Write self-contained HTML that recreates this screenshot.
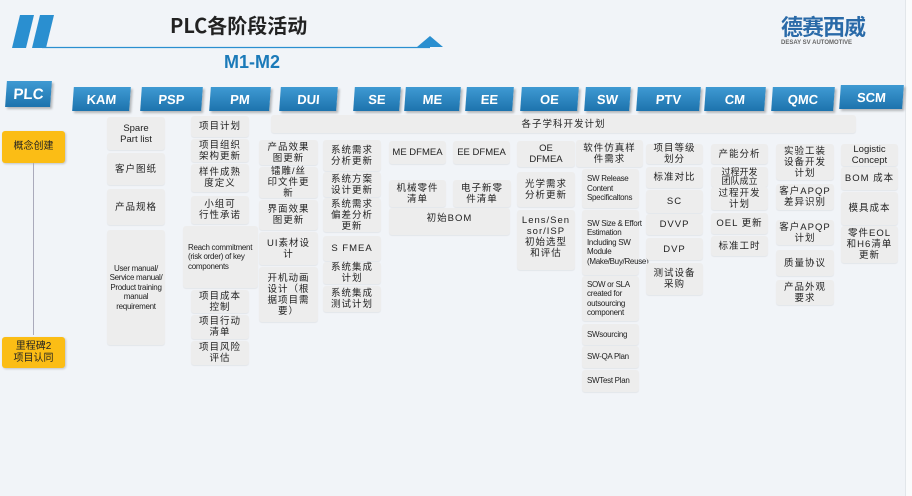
<!DOCTYPE html>
<html><head><meta charset="utf-8">
<style>
*{margin:0;padding:0;box-sizing:border-box}
body{width:912px;height:496px;overflow:hidden;background:#f1f4f8;font-family:"Liberation Sans","Noto Sans CJK SC",sans-serif;position:relative}
.strip{position:absolute;left:905px;top:0;width:7px;height:496px;background:#fafbfc;border-left:1px solid #e2e6ea}
.b{position:absolute;background:#ededed;border-radius:3px;box-shadow:0 1px 1px rgba(0,0,0,.06);display:flex;align-items:center;justify-content:center;text-align:center;font-size:9.5px;line-height:11px;color:#222;letter-spacing:1px;padding:1px}
.s{font-size:8px;line-height:9.5px;letter-spacing:-.3px}
.l{justify-content:flex-start;text-align:left}
.t{position:absolute;height:24px;background:linear-gradient(#3f9ad3,#1d73ad);color:#fff;font-weight:bold;font-size:13px;display:flex;align-items:center;justify-content:center;box-shadow:2px 2px 2px rgba(0,0,0,.25);transform:skewX(-4deg);font-family:"Liberation Sans Narrow","Liberation Sans",sans-serif}
.y{position:absolute;left:2px;width:63px;background:#fbbd15;border-radius:3px;box-shadow:1px 1px 2px rgba(0,0,0,.2);display:flex;align-items:center;justify-content:center;text-align:center;font-size:10px;line-height:12px;color:#222}
</style></head><body>
<div class="strip"></div>
<svg style="position:absolute;left:0;top:0" width="460" height="60">
<polygon points="20,15 34,15 26,48 12,48" fill="#2a8fd0"/>
<polygon points="40,15 54,15 46,48 32,48" fill="#2a8fd0"/>
<line x1="42" y1="47.5" x2="430" y2="47.5" stroke="#2a8fd0" stroke-width="1.2"/>
<polygon points="243,36 256,47 230,47" fill="#2a8fd0" transform="translate(187,0)"/>
</svg>
<div style="position:absolute;left:170px;top:10px;font-size:20px;font-weight:bold;color:#222;font-family:'Liberation Sans Narrow','Noto Sans CJK SC',sans-serif">PLC各阶段活动</div>
<div style="position:absolute;left:224px;top:52px;font-size:18px;font-weight:bold;color:#1b7ab9;font-family:'Liberation Sans Narrow','Liberation Sans',sans-serif">M1-M2</div>
<div style="position:absolute;left:781px;top:14px;font-size:22px;font-weight:bold;color:#2a6aa8;letter-spacing:-1px;font-family:'Noto Sans CJK SC',sans-serif;line-height:24px">德赛西威</div>
<div style="position:absolute;left:781px;top:40px;font-size:6px;font-weight:bold;color:#666">DESAY SV AUTOMOTIVE</div>

<div class="t" style="left:6px;top:81px;width:45px;height:26px;font-size:15px">PLC</div>
<div class="t" style="left:73px;top:87px;width:57px">KAM</div>
<div class="t" style="left:141px;top:87px;width:61px">PSP</div>
<div class="t" style="left:210px;top:87px;width:60px">PM</div>
<div class="t" style="left:280px;top:87px;width:57px">DUI</div>
<div class="t" style="left:354px;top:87px;width:46px">SE</div>
<div class="t" style="left:405px;top:87px;width:55px">ME</div>
<div class="t" style="left:466px;top:87px;width:47px">EE</div>
<div class="t" style="left:521px;top:87px;width:57px">OE</div>
<div class="t" style="left:585px;top:87px;width:45px">SW</div>
<div class="t" style="left:637px;top:87px;width:63px">PTV</div>
<div class="t" style="left:705px;top:87px;width:60px">CM</div>
<div class="t" style="left:772px;top:87px;width:62px">QMC</div>
<div class="t" style="left:840px;top:85px;width:63px">SCM</div>

<div class="y" style="top:131px;height:32px">概念创建</div>
<div style="position:absolute;left:33px;top:163px;width:1px;height:172px;background:#aab"></div>
<div class="y" style="top:337px;height:31px">里程碑2<br>项目认同</div>

<div class="b" style="left:271px;top:115px;width:585px;height:18px">各子学科开发计划</div>

<div class="b" style="left:107px;top:117px;width:58px;height:33px;letter-spacing:0">Spare<br>Part list</div>
<div class="b" style="left:107px;top:153px;width:58px;height:32px">客户图纸</div>
<div class="b" style="left:107px;top:189px;width:58px;height:36px">产品规格</div>
<div class="b s" style="left:107px;top:230px;width:58px;height:115px">User manual/ Service manual/ Product training manual requirement</div>

<div class="b" style="left:191px;top:116px;width:58px;height:21px">项目计划</div>
<div class="b" style="left:191px;top:139px;width:58px;height:23px">项目组织<br>架构更新</div>
<div class="b" style="left:191px;top:164px;width:58px;height:28px">样件成熟<br>度定义</div>
<div class="b" style="left:191px;top:196px;width:58px;height:28px">小组可<br>行性承诺</div>
<div class="b s l" style="left:183px;top:226px;width:75px;height:62px;padding-left:5px">Reach commitment (risk order) of key components</div>
<div class="b" style="left:191px;top:290px;width:58px;height:23px">项目成本<br>控制</div>
<div class="b" style="left:191px;top:315px;width:58px;height:24px">项目行动<br>清单</div>
<div class="b" style="left:191px;top:341px;width:58px;height:24px">项目风险<br>评估</div>

<div class="b" style="left:259px;top:140px;width:59px;height:25px">产品效果<br>图更新</div>
<div class="b" style="left:259px;top:167px;width:59px;height:31px">镭雕/丝<br>印文件更<br>新</div>
<div class="b" style="left:259px;top:200px;width:59px;height:30px">界面效果<br>图更新</div>
<div class="b" style="left:259px;top:232px;width:59px;height:33px">UI素材设<br>计</div>
<div class="b" style="left:259px;top:267px;width:59px;height:55px">开机动画<br>设计（根<br>据项目需<br>要）</div>

<div class="b" style="left:323px;top:140px;width:58px;height:31px">系统需求<br>分析更新</div>
<div class="b" style="left:323px;top:172px;width:58px;height:25px">系统方案<br>设计更新</div>
<div class="b" style="left:323px;top:198px;width:58px;height:34px">系统需求<br>偏差分析<br>更新</div>
<div class="b" style="left:323px;top:236px;width:58px;height:25px">S FMEA</div>
<div class="b" style="left:323px;top:262px;width:58px;height:22px">系统集成<br>计划</div>
<div class="b" style="left:323px;top:286px;width:58px;height:26px">系统集成<br>测试计划</div>

<div class="b" style="left:389px;top:141px;width:57px;height:23px;letter-spacing:0">ME DFMEA</div>
<div class="b" style="left:453px;top:141px;width:57px;height:23px;letter-spacing:0">EE DFMEA</div>
<div class="b" style="left:389px;top:180px;width:57px;height:27px">机械零件<br>清单</div>
<div class="b" style="left:453px;top:180px;width:58px;height:27px">电子新零<br>件清单</div>
<div class="b" style="left:389px;top:208px;width:121px;height:27px;align-items:flex-start;padding-top:5px">初始BOM</div>

<div class="b" style="left:517px;top:141px;width:58px;height:26px;letter-spacing:0">OE<br>DFMEA</div>
<div class="b" style="left:517px;top:172px;width:58px;height:35px">光学需求<br>分析更新</div>
<div class="b" style="left:517px;top:210px;width:58px;height:60px;align-items:flex-start;padding-top:5px">Lens/Sen<br>sor/ISP<br>初始选型<br>和评估</div>

<div class="b" style="left:576px;top:140px;width:67px;height:27px">软件仿真样<br>件需求</div>
<div class="b s l" style="left:582px;top:169px;width:57px;height:39px;padding-left:5px">SW Release Content Specificaltons</div>
<div class="b s l" style="left:582px;top:210px;width:57px;height:65px;padding-left:5px">SW Size &amp; Effort Estimation Including SW Module (Make/Buy/Reuse)</div>
<div class="b s l" style="left:582px;top:276px;width:57px;height:45px;padding-left:5px">SOW or SLA created for outsourcing component</div>
<div class="b s l" style="left:582px;top:324px;width:57px;height:21px;padding-left:5px">SWsourcing</div>
<div class="b s l" style="left:582px;top:346px;width:57px;height:22px;padding-left:5px">SW-QA Plan</div>
<div class="b s l" style="left:582px;top:370px;width:57px;height:22px;padding-left:5px">SWTest Plan</div>

<div class="b" style="left:646px;top:144px;width:57px;height:20px">项目等级<br>划分</div>
<div class="b" style="left:646px;top:167px;width:57px;height:21px">标准对比</div>
<div class="b" style="left:646px;top:190px;width:57px;height:23px">SC</div>
<div class="b" style="left:646px;top:214px;width:57px;height:21px">DVVP</div>
<div class="b" style="left:646px;top:238px;width:57px;height:22px">DVP</div>
<div class="b" style="left:646px;top:263px;width:57px;height:32px">测试设备<br>采购</div>

<div class="b" style="left:711px;top:144px;width:57px;height:20px">产能分析</div>
<div class="b s" style="left:711px;top:167px;width:57px;height:20px;font-size:9px;letter-spacing:0">过程开发<br>团队成立</div>
<div class="b" style="left:711px;top:187px;width:57px;height:23px">过程开发<br>计划</div>
<div class="b" style="left:711px;top:213px;width:57px;height:21px">OEL 更新</div>
<div class="b" style="left:711px;top:236px;width:57px;height:20px">标准工时</div>

<div class="b" style="left:776px;top:144px;width:58px;height:36px">实验工装<br>设备开发<br>计划</div>
<div class="b" style="left:776px;top:184px;width:58px;height:26px">客户APQP<br>差异识别</div>
<div class="b" style="left:776px;top:220px;width:58px;height:25px">客户APQP<br>计划</div>
<div class="b" style="left:776px;top:250px;width:58px;height:26px">质量协议</div>
<div class="b" style="left:776px;top:280px;width:58px;height:25px">产品外观<br>要求</div>

<div class="b" style="left:841px;top:144px;width:57px;height:22px;letter-spacing:0">Logistic<br>Concept</div>
<div class="b" style="left:841px;top:167px;width:57px;height:23px">BOM 成本</div>
<div class="b" style="left:841px;top:192px;width:57px;height:33px">模具成本</div>
<div class="b" style="left:841px;top:226px;width:57px;height:37px">零件EOL<br>和H6清单<br>更新</div>
</body></html>
